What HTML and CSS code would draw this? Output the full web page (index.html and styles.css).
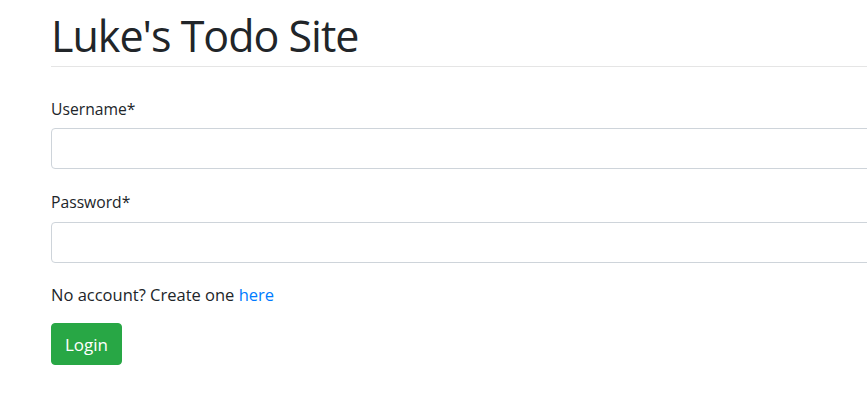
FILE: index.html
```html
<!DOCTYPE html>
<html lang="en">
<head>
<meta charset="utf-8">
<title>Luke's Todo Site</title>
<link rel="stylesheet" href="styles.css">
</head>
<body>
<div class="container">
  <header class="page-header">
    <h1 class="title">Luke's Todo Site</h1>
  </header>
  <form class="login-form">
    <div class="form-group">
      <label class="form-label" for="username">Username*</label>
      <input class="form-control" id="username" type="text">
    </div>
    <div class="form-group">
      <label class="form-label" for="password">Password*</label>
      <input class="form-control" id="password" type="password">
    </div>
    <p class="signup-note">No account? Create one <a class="link" href="#">here</a></p>
    <button class="btn-login" type="button">Login</button>
  </form>
</div>
</body>
</html>
```

FILE: styles.css
```css
html, body {
  margin: 0;
  padding: 0;
  background: #ffffff;
  overflow: hidden;
}

body {
  font-family: "Open Sans", "Noto Sans", "Liberation Sans", sans-serif;
  color: #212529;
  font-size: 16px;
}

.container {
  width: 1300px;
  padding-left: 51px;
  box-sizing: border-box;
}

.page-header {
  height: 66px;
  border-bottom: 1px solid #e5e5e5;
  display: flex;
  align-items: flex-end;
}

.title {
  margin: 0;
  font-size: 43px;
  font-weight: 400;
  line-height: 60px;
  height: 60px;
  letter-spacing: -1px;
}

.login-form {
  display: flex;
  flex-direction: column;
  align-items: flex-start;
  padding-top: 30px;
}

.form-group {
  display: flex;
  flex-direction: column;
  align-self: stretch;
  margin-bottom: 21px;
}

.form-label {
  line-height: 24px;
  height: 24px;
  margin-bottom: 7px;
  font-size: 15.7px;
}

.form-group + .form-group .form-label {
  margin-bottom: 8px;
}

.form-control {
  height: 41px;
  box-sizing: border-box;
  border: 1px solid #ced4da;
  border-radius: 4px;
  background: #fff;
  margin: 0;
}

.signup-note {
  margin: -1px 0 16px 0;
  line-height: 24px;
  height: 24px;
  font-size: 16.5px;
}

.link {
  color: #007bff;
  text-decoration: none;
}

.btn-login {
  height: 42px;
  width: 71px;
  box-sizing: border-box;
  border: 1px solid #28a745;
  border-radius: 4px;
  background: #28a745;
  color: #ffffff;
  font-family: inherit;
  font-size: 17px;
  padding: 0;
}
```
